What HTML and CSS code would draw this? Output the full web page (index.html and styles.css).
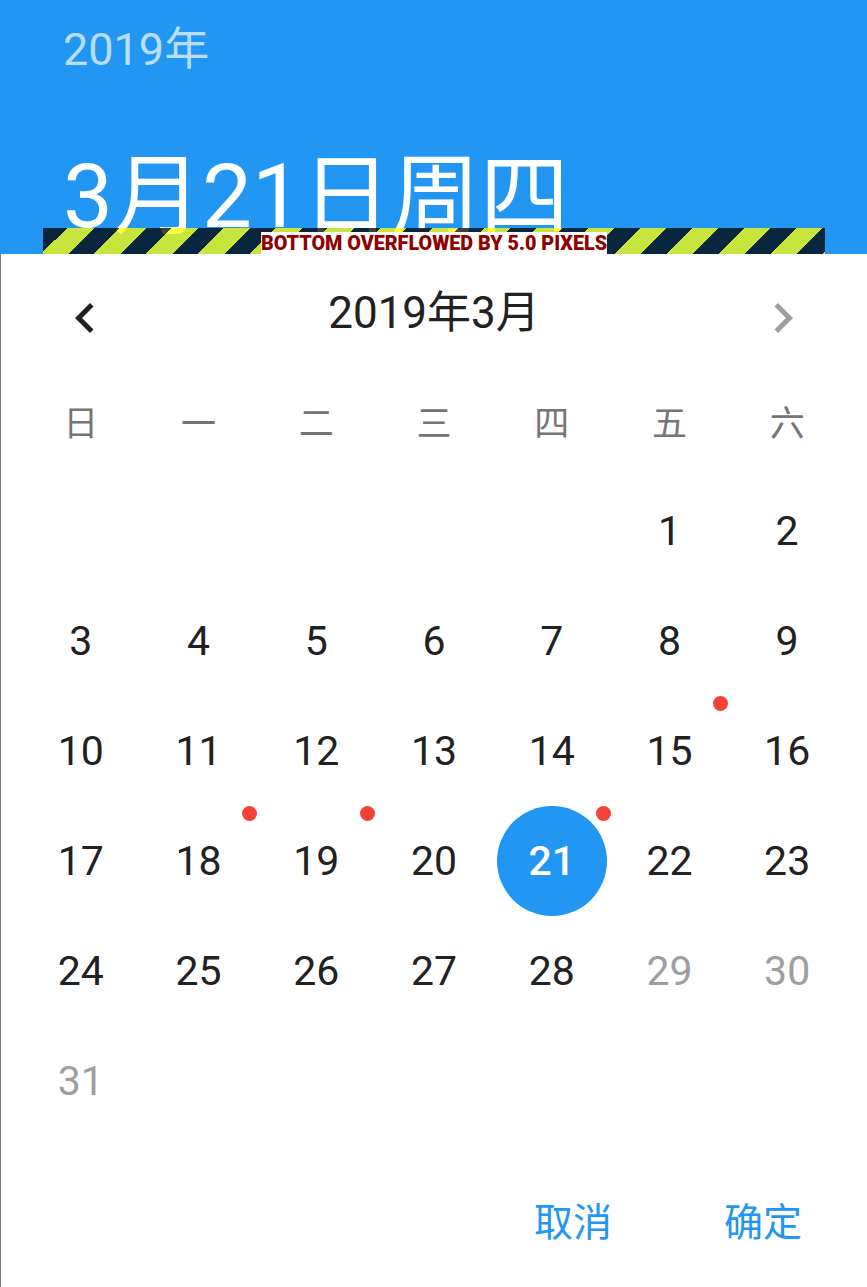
FILE: index.html
```html
<!DOCTYPE html>
<html lang="zh-CN">
<head>
<meta charset="utf-8">
<title>日期选择</title>
<link rel="stylesheet" href="styles.css">
</head>
<body>
<div class="dialog">
  <header class="header">
    <div class="year">2019年</div>
    <div class="date">3月21日周四</div>
    <div class="overflow"><span class="overflow-label">BOTTOM OVERFLOWED BY 5.0 PIXELS</span></div>
  </header>
  <section class="picker">
    <div class="nav">
      <button class="nav-btn prev" aria-label="上个月"><svg viewBox="0 0 24 24"><path d="M15.41 7.41L14 6l-6 6 6 6 1.41-1.41L10.83 12z"/></svg></button>
      <div class="month">2019年3月</div>
      <button class="nav-btn next" aria-label="下个月"><svg viewBox="0 0 24 24"><path d="M10 6L8.59 7.41 13.17 12l-4.58 4.59L10 18l6-6z"/></svg></button>
    </div>
    <div class="grid weekdays">
      <div class="cell wd">日</div><div class="cell wd">一</div><div class="cell wd">二</div><div class="cell wd">三</div><div class="cell wd">四</div><div class="cell wd">五</div><div class="cell wd">六</div>
    </div>
    <div class="grid days">
      <div class="cell"></div><div class="cell"></div><div class="cell"></div><div class="cell"></div><div class="cell"></div>
      <div class="cell">1</div><div class="cell">2</div>
      <div class="cell">3</div><div class="cell">4</div><div class="cell">5</div><div class="cell">6</div><div class="cell">7</div><div class="cell">8</div><div class="cell">9</div>
      <div class="cell">10</div><div class="cell">11</div><div class="cell">12</div><div class="cell">13</div><div class="cell">14</div><div class="cell">15<span class="dot"></span></div><div class="cell">16</div>
      <div class="cell">17</div><div class="cell">18<span class="dot"></span></div><div class="cell">19<span class="dot"></span></div><div class="cell">20</div><div class="cell"><span class="selected">21</span><span class="dot"></span></div><div class="cell">22</div><div class="cell">23</div>
      <div class="cell">24</div><div class="cell">25</div><div class="cell">26</div><div class="cell">27</div><div class="cell">28</div><div class="cell muted">29</div><div class="cell muted">30</div>
      <div class="cell muted">31</div>
    </div>
    <div class="actions">
      <button class="action">取消</button>
      <button class="action">确定</button>
    </div>
  </section>
</div>
</body>
</html>
```

FILE: styles.css
```css
html, body {
  margin: 0;
  padding: 0;
  background: #ffffff;
}

body {
  width: 867px;
  height: 1287px;
  overflow: hidden;
  font-family: Roboto, "Noto Sans CJK SC", sans-serif;
}

.dialog {
  width: 867px;
  height: 1287px;
  display: flex;
  flex-direction: column;
}

.header {
  position: relative;
  height: 254px;
  flex: none;
  box-sizing: border-box;
  padding: 24px 0 0 63px;
  background: #2196F3;
  color: #ffffff;
  overflow: hidden;
}

.year {
  font-size: 45px;
  line-height: 52px;
  color: rgba(255, 255, 255, 0.7);
}

.date {
  margin-top: 71px;
  font-size: 89px;
  line-height: 100px;
  white-space: nowrap;
}

.overflow {
  position: absolute;
  left: 43px;
  top: 228px;
  width: 782px;
  height: 26px;
  display: flex;
  justify-content: center;
  align-items: flex-end;
  background: repeating-linear-gradient(135deg,
    rgba(0, 0, 0, 0.75) 0 9.19px,
    rgba(255, 255, 0, 0.75) 9.19px 27.58px,
    rgba(0, 0, 0, 0.75) 27.58px 36.77px);
  background-position: 12px 0;
}

.overflow-label {
  display: inline-block;
  background: #ffffff;
  color: #900000;
  font-weight: 900;
  font-size: 21px;
  line-height: 22px;
  white-space: nowrap;
  transform: scaleX(0.94);
  transform-origin: center bottom;
}

.picker {
  flex: 1;
  box-sizing: border-box;
  border-left: 1px solid #7c7c7c;
  padding: 0 21px;
}

.nav {
  height: 112px;
  box-sizing: border-box;
  padding: 16px 33px 0;
  display: flex;
  align-items: center;
  justify-content: space-between;
}

.nav-btn {
  width: 60px;
  height: 60px;
  padding: 0;
  margin: 0;
  border: none;
  background: none;
}

.nav-btn svg {
  display: block;
  width: 60px;
  height: 60px;
}

.prev svg { fill: #212121; }
.next svg { fill: #9e9e9e; }

.month {
  font-size: 44px;
  line-height: 60px;
  color: #212121;
  margin-bottom: 10px;
}

.grid {
  display: grid;
  grid-template-columns: repeat(7, 1fr);
  grid-auto-rows: 110px;
}

.cell {
  position: relative;
  display: flex;
  align-items: center;
  justify-content: center;
  font-size: 41px;
  color: #212121;
}

.wd {
  font-size: 35px;
  color: #757575;
  box-sizing: border-box;
  padding-bottom: 2px;
}

.muted {
  color: #9e9e9e;
}

.selected {
  width: 110px;
  height: 110px;
  border-radius: 50%;
  background: #2196F3;
  color: #ffffff;
  font-weight: 500;
  display: flex;
  align-items: center;
  justify-content: center;
}

.dot {
  position: absolute;
  top: 0;
  right: 0;
  width: 15px;
  height: 15px;
  border-radius: 50%;
  background: #F44336;
}

.actions {
  display: flex;
  justify-content: flex-end;
  gap: 28px;
  margin-top: 36px;
  padding-right: 2px;
}

.action {
  height: 94px;
  padding: 0 42px;
  margin: 0;
  border: none;
  background: none;
  font-family: inherit;
  font-size: 39px;
  color: #2196F3;
}
```
